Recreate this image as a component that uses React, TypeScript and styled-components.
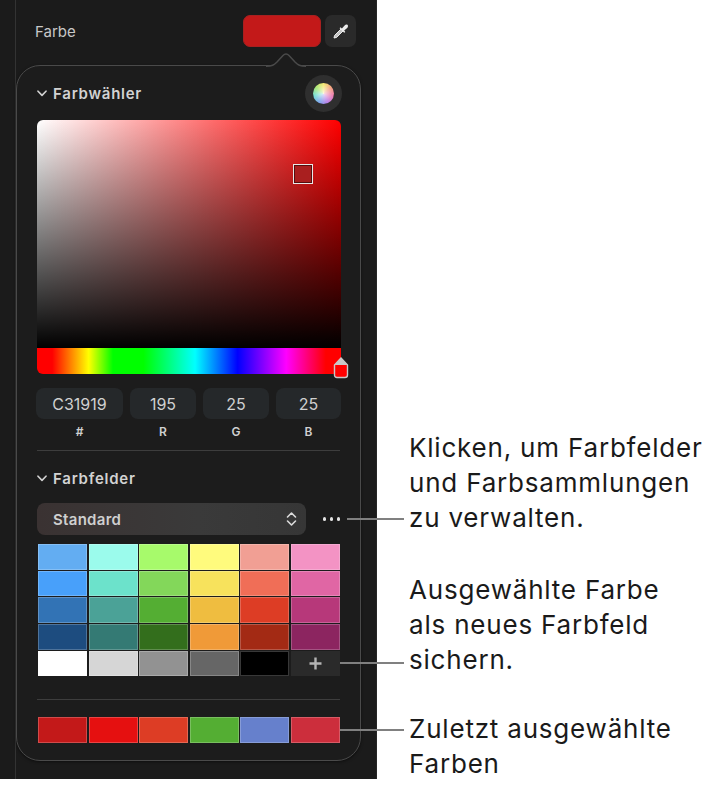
import { FC } from 'react';
import styled, { createGlobalStyle } from 'styled-components';

const GlobalStyle = createGlobalStyle`
  html, body {
    margin: 0;
    padding: 0;
    background: #ffffff;
  }
`;

const Page = styled.div`
  display: flex;
  width: 710px;
  height: 787px;
  overflow: hidden;
  font-family: Inter, "Liberation Sans", sans-serif;
`;

const Panel = styled.div`
  box-sizing: border-box;
  width: 377px;
  height: 779px;
  flex: none;
  background: #1b1b1b;
  padding: 15px 16px 0 16px;
  border-right: 1px solid #262626;
  position: relative;
`;

const SidebarEdge = styled.div`
  position: absolute;
  left: 15px;
  top: 0;
  bottom: 0;
  width: 1px;
  background: #333;
`;

const ColourRow = styled.div`
  display: flex;
  align-items: center;
  height: 32px;
  padding: 0 4px 0 19px;
  gap: 4px;
`;

const RowLabel = styled.span`
  flex: 1;
  color: #c8c8c8;
  font-size: 15px;
`;

const ColourWell = styled.div`
  width: 78px;
  height: 32px;
  box-sizing: border-box;
  border-radius: 7px;
  background: #c31919;
  border: 1px solid #a82020;
`;

const DropperButton = styled.div`
  width: 31px;
  height: 32px;
  border-radius: 7px;
  background: #2a2a2a;
  display: flex;
  align-items: center;
  justify-content: center;
`;

const Popover = styled.div`
  box-sizing: border-box;
  position: relative;
  width: 345px;
  height: 696px;
  margin-top: 18px;
  padding: 0 20px;
  border: 1.5px solid #4a4a4a;
  border-radius: 24px;
  background: #1c1c1c;
  box-shadow: 0 1px 3px rgba(0, 0, 0, 0.5);
`;

const PopoverArrow = styled.svg`
  position: absolute;
  left: 249px;
  top: -17px;
`;

const SectionHeader = styled.div<{ $height: number }>`
  display: flex;
  align-items: center;
  gap: 6px;
  height: ${({ $height }) => $height}px;
  color: #d2d2d2;
  font-size: 15px;
  font-weight: 600;
  letter-spacing: 0.75px;
`;

const HeaderTitle = styled.span`
  flex: 1;
`;

const WheelButton = styled.div`
  width: 37px;
  height: 37px;
  margin-right: -2px;
  border-radius: 50%;
  background: #2f2f2f;
  display: flex;
  align-items: center;
  justify-content: center;
`;

const ColourWheel = styled.div`
  width: 21px;
  height: 21px;
  border-radius: 50%;
  background:
    radial-gradient(circle, rgba(255, 255, 255, 0.8) 0%, rgba(255, 255, 255, 0.3) 55%, rgba(255, 255, 255, 0) 100%),
    conic-gradient(#f2e34c, #f0885a, #e85a9c, #a65ae0, #5a8ee8, #52d6c8, #8ee04e, #f2e34c);
`;

const ColourField = styled.div`
  position: relative;
  width: 304px;
  height: 228px;
  border-radius: 6px 6px 0 0;
  background:
    linear-gradient(to bottom, rgba(0, 0, 0, 0) 0%, #000 100%),
    linear-gradient(to right, #fff 0%, #ff0000 100%);
`;

const FieldMarker = styled.div`
  position: absolute;
  left: 256px;
  top: 44px;
  width: 20px;
  height: 20px;
  box-sizing: border-box;
  background: #a91f1f;
  border: 1.5px solid #e8e8e8;
  box-shadow: inset 0 0 0 1px rgba(0, 0, 0, 0.5);
`;

const HueBar = styled.div`
  position: relative;
  width: 304px;
  height: 26px;
  border-radius: 0 0 0 6px;
  background: linear-gradient(
    to right,
    #ff0000 0%,
    #ff0000 5%,
    #ffff00 17%,
    #00ff00 25%,
    #00ff00 35%,
    #00ffff 52%,
    #0000ff 66%,
    #ff00ff 82%,
    #ff0000 95%,
    #ff0000 100%
  );
`;

const HueHandle = styled.svg`
  position: absolute;
  right: -8px;
  top: 9px;
`;

const FieldsRow = styled.div`
  display: grid;
  grid-template-columns: 87px 66px 66px 65px;
  gap: 7px;
  margin: 14px -1px 0;
`;

const FieldColumn = styled.div`
  display: flex;
  flex-direction: column;
  align-items: center;
`;

const ValueBox = styled.div`
  width: 100%;
  height: 31px;
  border-radius: 8px;
  background: #25282a;
  color: #d0d0d0;
  font-size: 16px;
  display: flex;
  align-items: center;
  justify-content: center;
`;

const ValueLabel = styled.div`
  margin-top: 6px;
  height: 14px;
  line-height: 14px;
  color: #d0d0d0;
  font-size: 12px;
  font-weight: 600;
`;

const Divider = styled.div<{ $top: number }>`
  height: 1px;
  background: #3d3d3d;
  margin-top: ${({ $top }) => $top}px;
`;

const SelectRow = styled.div`
  display: flex;
  align-items: center;
  margin-top: -2px;
`;

const SelectBox = styled.div`
  box-sizing: border-box;
  width: 271px;
  height: 32px;
  border-radius: 8px;
  padding: 0 9px 0 16px;
  background: linear-gradient(to right, #3a3232, #3a3a3a 60%, #363636);
  color: #cfcfcf;
  font-size: 15px;
  font-weight: 600;
  letter-spacing: 0.3px;
  display: flex;
  align-items: center;
  justify-content: space-between;
`;

const MoreDots = styled.div`
  display: flex;
  gap: 3.5px;
  margin-left: 17px;
`;

const Dot = styled.span`
  width: 3.5px;
  height: 3.5px;
  border-radius: 50%;
  background: #e4e4e4;
`;

const SwatchGrid = styled.div<{ $top: number }>`
  display: grid;
  grid-template-columns: repeat(6, 1fr);
  grid-auto-rows: 25.5px;
  gap: 1.2px 1.6px;
  width: 302px;
  margin: ${({ $top }) => $top}px 0 0 1px;
`;

const Swatch = styled.div<{ $colour: string }>`
  box-sizing: border-box;
  background: ${({ $colour }) => $colour};
  border: 1px solid rgba(255, 255, 255, 0.22);
`;

const AddSwatch = styled.div`
  background: #2a2a2a;
  display: flex;
  align-items: center;
  justify-content: center;
`;

const Callouts = styled.div`
  display: flex;
  flex-direction: column;
  padding: 430px 0 0 32px;
`;

const Callout = styled.div<{ $top: number }>`
  position: relative;
  margin-top: ${({ $top }) => $top}px;
  color: #1a1a1a;
  font-size: 26px;
  letter-spacing: 0.8px;
  line-height: 35px;
  white-space: nowrap;
`;

const Leader = styled.div<{ $top: number; $width: number }>`
  position: absolute;
  left: ${({ $width }) => -5 - $width}px;
  top: ${({ $top }) => $top}px;
  width: ${({ $width }) => $width}px;
  height: 2px;
  background: #808080;
`;

const palette = [
  '#63adf2', '#9bfbec', '#a7fa6b', '#fffb7d', '#f19f94', '#f393c4',
  '#48a0fa', '#6ce2cb', '#83d75a', '#f7e25c', '#f06e57', '#e066a4',
  '#3273b5', '#4ba297', '#54ae33', '#efbd40', '#dd3d25', '#b7387a',
  '#1d4c7f', '#347a74', '#336e1c', '#f09a38', '#a32a14', '#8c2560',
  '#ffffff', '#d6d6d6', '#929292', '#666666', '#000000',
];

const recent = ['#c31919', '#e51010', '#dd3d25', '#54ae33', '#6680cc', '#cc2e3c'];

const Chevron: FC = () => (
  <svg width="10" height="7" viewBox="0 0 10 7">
    <path d="M1 1.2 L5 5.4 L9 1.2" fill="none" stroke="#d2d2d2" strokeWidth="1.6" strokeLinecap="round" strokeLinejoin="round" />
  </svg>
);

const App: FC = () => {
  return (
    <Page>
      <GlobalStyle />
      <Panel>
        <SidebarEdge />
        <ColourRow>
          <RowLabel>Farbe</RowLabel>
          <ColourWell />
          <DropperButton>
            <svg width="18" height="18" viewBox="0 0 18 18">
              <path d="M2 16 L2.6 13.4 L9 7 L11 9 L4.6 15.4 Z" fill="#c4c4c4" stroke="#ececec" strokeWidth="1" strokeLinejoin="round" />
              <path d="M8.4 5.2 L9.9 6.4 L12.6 3.4 C13.5 2.4 15 2.3 15.6 3 C16.3 3.7 16.1 5 15.2 5.9 L12.2 8.6 L13.3 10 L12.2 10.8 L7.6 6.2 Z" fill="#ececec" />
            </svg>
          </DropperButton>
        </ColourRow>
        <Popover>
          <PopoverArrow width="40" height="18" viewBox="0 0 40 18">
            <path d="M0 17.2 C6 17.2 8 16 11 13 L17 6.5 C18.8 4.6 21.2 4.6 23 6.5 L29 13 C32 16 34 17.2 40 17.2 L40 18 L0 18 Z" fill="#1c1c1c" />
            <path d="M0 17.2 C6 17.2 8 16 11 13 L17 6.5 C18.8 4.6 21.2 4.6 23 6.5 L29 13 C32 16 34 17.2 40 17.2" fill="none" stroke="#4a4a4a" strokeWidth="1.5" />
          </PopoverArrow>
          <SectionHeader $height={54}>
            <Chevron />
            <HeaderTitle>Farbwähler</HeaderTitle>
            <WheelButton>
              <ColourWheel />
            </WheelButton>
          </SectionHeader>
          <ColourField>
            <FieldMarker />
          </ColourField>
          <HueBar>
            <HueHandle width="16" height="22" viewBox="0 0 16 22">
              <path d="M8 1 L14.5 8 L14.5 18 C14.5 19.6 13.6 20.5 12 20.5 L4 20.5 C2.4 20.5 1.5 19.6 1.5 18 L1.5 8 Z" fill="#ff0000" stroke="#c8c8c8" strokeWidth="1.4" />
              <path d="M8 1 L14.5 8 L1.5 8 Z" fill="#c8c8c8" />
            </HueHandle>
          </HueBar>
          <FieldsRow>
            <FieldColumn>
              <ValueBox>C31919</ValueBox>
              <ValueLabel>#</ValueLabel>
            </FieldColumn>
            <FieldColumn>
              <ValueBox>195</ValueBox>
              <ValueLabel>R</ValueLabel>
            </FieldColumn>
            <FieldColumn>
              <ValueBox>25</ValueBox>
              <ValueLabel>G</ValueLabel>
            </FieldColumn>
            <FieldColumn>
              <ValueBox>25</ValueBox>
              <ValueLabel>B</ValueLabel>
            </FieldColumn>
          </FieldsRow>
          <Divider $top={11} />
          <SectionHeader $height={54}>
            <Chevron />
            <HeaderTitle>Farbfelder</HeaderTitle>
          </SectionHeader>
          <SelectRow>
            <SelectBox>
              Standard
              <svg width="11" height="16" viewBox="0 0 11 16">
                <path d="M1.5 6 L5.5 2 L9.5 6 M1.5 10 L5.5 14 L9.5 10" fill="none" stroke="#dcdcdc" strokeWidth="1.6" strokeLinecap="round" strokeLinejoin="round" />
              </svg>
            </SelectBox>
            <MoreDots>
              <Dot />
              <Dot />
              <Dot />
            </MoreDots>
          </SelectRow>
          <SwatchGrid $top={9}>
            {palette.map((colour) => (
              <Swatch key={colour} $colour={colour} />
            ))}
            <AddSwatch>
              <svg width="13" height="13" viewBox="0 0 13 13">
                <path d="M6.5 0.5 V12.5 M0.5 6.5 H12.5" stroke="#b4b4b4" strokeWidth="2.4" />
              </svg>
            </AddSwatch>
          </SwatchGrid>
          <Divider $top={23} />
          <SwatchGrid $top={17}>
            {recent.map((colour) => (
              <Swatch key={colour} $colour={colour} />
            ))}
          </SwatchGrid>
        </Popover>
      </Panel>
      <Callouts>
        <Callout $top={0}>
          <Leader $top={88} $width={57} />
          Klicken, um Farbfelder
          <br />
          und Farbsammlungen
          <br />
          zu verwalten.
        </Callout>
        <Callout $top={37}>
          <Leader $top={90} $width={64} />
          Ausgewählte Farbe
          <br />
          als neues Farbfeld
          <br />
          sichern.
        </Callout>
        <Callout $top={34}>
          <Leader $top={18} $width={64} />
          Zuletzt ausgewählte
          <br />
          Farben
        </Callout>
      </Callouts>
    </Page>
  );
};

export default App;
